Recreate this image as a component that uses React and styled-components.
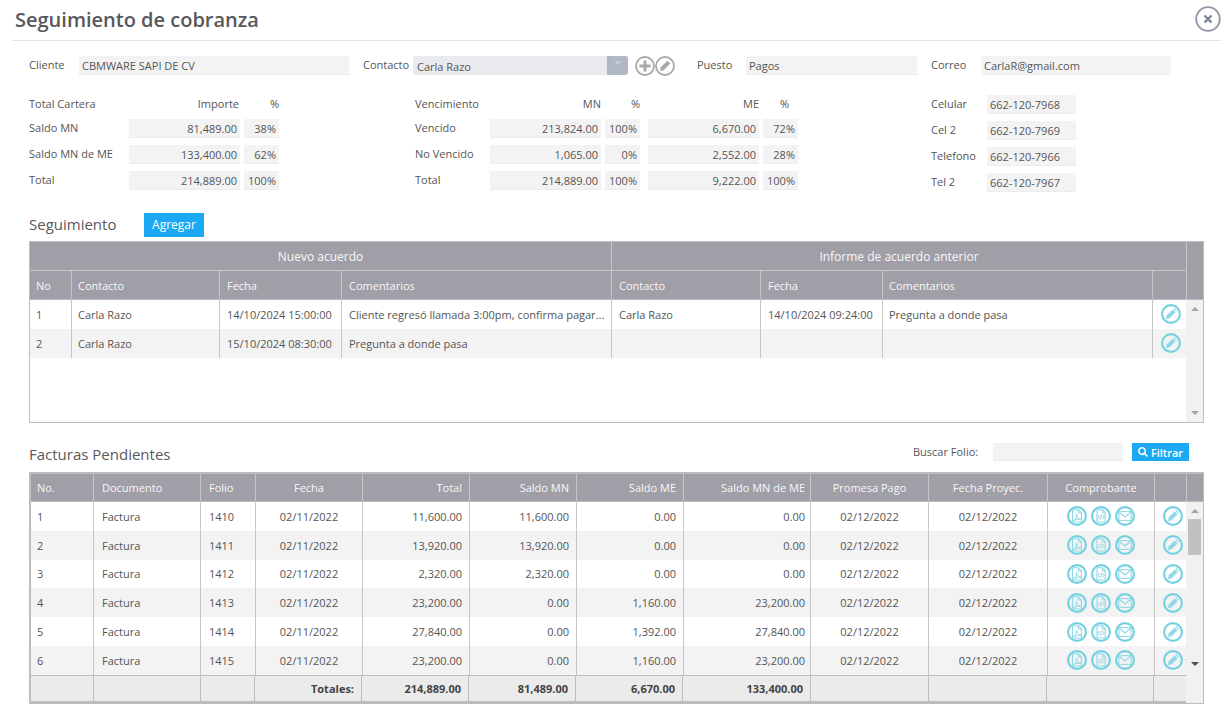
import React from 'react';
import styled, { createGlobalStyle } from 'styled-components';
import { FaSearch } from 'react-icons/fa';

const GlobalStyle = createGlobalStyle`
  html, body { margin: 0; padding: 0; background: #fff; }
  * { box-sizing: border-box; }
  body { font-family: "Open Sans", "Liberation Sans", sans-serif; font-size: 11px; color: #555; }
`;

const Page = styled.div`
  width: 1230px;
  height: 722px;
  overflow: hidden;
`;
const Header = styled.div`
  display: flex;
  align-items: center;
  justify-content: space-between;
  height: 41px;
  margin: 0 9px 0 12px;
  padding: 0 0 1px 3px;
  border-bottom: 1px solid #e2e2e2;
  h1 {
    margin: 0;
    font-size: 20px;
    font-weight: 600;
    color: #58585c;
  }
`;
const CloseIcon = styled.svg`
  width: 26px;
  height: 26px;
  margin-top: -1px;
`;
const ContactRow = styled.div`
  display: flex;
  align-items: center;
  height: 19px;
  margin: 15px 0 0 29px;
`;
const Label = styled.span`
  display: block;
  width: ${(p) => p.$w || 'auto'};
  flex: none;
  color: #555;
  line-height: 17px;
  padding-bottom: 2px;
  white-space: nowrap;
`;
const Field = styled.div`
  width: ${(p) => p.$w || 'auto'};
  height: 19px;
  flex: none;
  padding: 0 3px;
  background: #f3f3f3;
  border-bottom: 1px solid #ececec;
  line-height: 19px;
  text-align: ${(p) => (p.$right ? 'right' : 'left')};
  margin-right: ${(p) => p.$mr || '0'};
  white-space: nowrap;
`;
const SelectBox = styled.div`
  display: flex;
  justify-content: space-between;
  width: 215px;
  height: 19px;
  flex: none;
  margin-right: 7px;
  padding-left: 4px;
  background: #eaebef;
  border-radius: 2px;
  line-height: 21px;
`;
const SelectArrow = styled.div`
  display: flex;
  justify-content: center;
  padding-top: 5px;
  width: 21px;
  height: 19px;
  background: #b2b7c4;
  border-radius: 0 3px 3px 0;
  &::after {
    content: '';
    width: 0;
    height: 0;
    border-left: 4px solid transparent;
    border-right: 4px solid transparent;
    border-top: 4px solid #c8cbd4;
  }
`;
const ToolIcons = styled.div`
  display: flex;
  align-items: center;
  width: 62px;
  flex: none;
`;
const Stats = styled.div`
  display: flex;
  align-items: flex-start;
  margin: 20px 0 0 29px;
`;
const StatGrid = styled.div`
  display: grid;
  grid-template-columns: ${(p) => p.$cols};
  row-gap: 7px;
  margin-right: ${(p) => p.$mr || '0'};
  align-items: center;
`;
const StatHead = styled.div`
  height: 17px;
  line-height: 18px;
  text-align: ${(p) => (p.$right ? 'right' : 'left')};
  padding-right: ${(p) => p.$pr || '0'};
`;
const Spacer = styled.div``;
const SectionHead = styled.div`
  display: flex;
  align-items: center;
  height: 24px;
  margin: 21px 0 4px 29px;
  h2 {
    width: 115px;
    margin: 0;
    padding-bottom: 2px;
    font-size: 15px;
    font-weight: 400;
    color: #58585c;
  }
`;
const AddButton = styled.div`
  width: 60px;
  height: 24px;
  background: #1aa9f2;
  color: #fff;
  font-size: 12px;
  line-height: 24px;
  text-align: center;
`;
const InvoiceHead = styled.div`
  display: flex;
  align-items: center;
  height: 24px;
  margin: 17px 0 8px 29px;
  h2 {
    width: 884px;
    margin: 0;
    padding-top: 3px;
    font-size: 15px;
    font-weight: 400;
    color: #58585c;
  }
`;
const SearchLabel = styled.span`
  width: 80px;
  padding-bottom: 2px;
  line-height: 17px;
`;
const SearchInput = styled.div`
  width: 130px;
  height: 18px;
  margin-right: 9px;
  background: #f3f3f3;
  border-bottom: 1px solid #ececec;
`;
const FilterButton = styled.div`
  display: flex;
  align-items: center;
  justify-content: center;
  gap: 3px;
  width: 57px;
  height: 18px;
  background: #1aa9f2;
  color: #fff;
  font-weight: 600;
  svg { width: 10px; height: 10px; }
`;
const Frame = styled.div`
  width: 1175px;
  margin-left: 29px;
  height: ${(p) => p.$h};
  border: 1px solid #bdbdbd;
  border-left-width: ${(p) => p.$left || '1px'};
  border-top-width: ${(p) => p.$left || '1px'};
`;
const HeadWrap = styled.div`
  display: flex;
  background: #a09ea7;
  color: #f8f8f8;
  border-bottom: 1px solid #bdbdbd;
`;
const HeadStack = styled.div`
  width: ${(p) => p.$w};
  flex: none;
`;
const HeadEnd = styled.div`
  flex: 1;
  border-left: 1px solid #c6c6c6;
`;
const GroupRow = styled.div`
  display: grid;
  grid-template-columns: 581px 575px;
  height: 29px;
  border-bottom: 1px solid #c6c6c6;
`;
const GroupCell = styled.div`
  font-size: 12px;
  line-height: 29px;
  text-align: center;
  & + & { border-left: 1px solid #c6c6c6; }
`;
const Row = styled.div`
  display: grid;
  grid-template-columns: ${(p) => p.$cols};
  height: ${(p) => p.$h};
  background: ${(p) => (p.$alt ? '#f3f3f3' : '#fff')};
`;
const HeadRow = styled(Row)`
  background: transparent;
`;
const Cell = styled.div`
  display: flex;
  align-items: center;
  justify-content: ${(p) => (p.$align === 'right' ? 'flex-end' : p.$align === 'center' ? 'center' : 'flex-start')};
  min-width: 0;
  padding-left: ${(p) => p.$pl || (p.$align === 'center' ? '0' : '7px')};
  padding-right: ${(p) => p.$pr || (p.$align === 'center' ? '0' : '7px')};
  padding-bottom: ${(p) => p.$pb || '0'};
  border-right: 1px solid ${(p) => (p.$last ? 'transparent' : '#c6c6c6')};
  gap: ${(p) => p.$gap || '0'};
  white-space: nowrap;
`;
const HeadCell = styled(Cell)`
  color: #f8f8f8;
`;
const TotalCell = styled(Cell)`
  font-weight: 700;
  border-right-color: ${(p) => (p.$last ? 'transparent' : '#bdbdbd')};
  color: #444;
`;
const BodyWrap = styled.div`
  display: flex;
`;
const Rows = styled.div`
  width: ${(p) => p.$w};
  flex: none;
`;
const Scrollbar = styled.div`
  display: flex;
  flex-direction: column;
  align-items: center;
  justify-content: space-between;
  flex: 1;
  height: ${(p) => p.$h};
  padding: ${(p) => p.$pad};
  background: #f1f1f1;
`;
const ArrowUp = styled.div`
  width: 0;
  height: 0;
  border-left: 4px solid transparent;
  border-right: 4px solid transparent;
  border-bottom: 4px solid ${(p) => p.$c || '#a3a3a3'};
`;
const ArrowDown = styled.div`
  width: 0;
  height: 0;
  border-left: 4px solid transparent;
  border-right: 4px solid transparent;
  border-top: 4px solid ${(p) => p.$c || '#a3a3a3'};
`;
const Thumb = styled.div`
  width: 13px;
  height: 36px;
  margin-top: 6px;
  margin-bottom: auto;
  background: #c1c1c1;
`;
const FooterWrap = styled.div`
  display: flex;
  height: 28px;
`;
const FooterRows = styled(Row)`
  width: 1155px;
  flex: none;
  background: #ebebeb;
  border-top: 1px solid #bdbdbd;
  border-bottom: 2px solid #bdbdbd;
  height: 28px;
`;
const FooterEnd = styled.div`
  flex: 1;
  background: #f1f1f1;
`;
const IconSvg = styled.svg`
  width: 20px;
  height: 20px;
  flex: none;
`;

const TEAL = '#72d0e0';
const TEAL_SOFT = '#8fd9e6';

const Ring = ({ children }) => (
  <IconSvg viewBox="0 0 20 20" fill="none">
    <circle cx="10" cy="10" r="8.9" stroke={TEAL} strokeWidth="2.1" fill="none" />
    {children}
  </IconSvg>
);
const PencilIcon = () => (
  <Ring>
    <path d="M4.8 15.2l1-3.9 5.9-5.9 2.9 2.9-5.9 5.9z" fill={TEAL_SOFT} />
    <path d="M12.4 4.7l.9-.8 2.8 2.8-.8.9z" fill={TEAL_SOFT} />
  </Ring>
);
const PdfIcon = () => (
  <Ring>
    <path d="M5.5 3.8h6l2.9 2.9V16H5.5z" stroke={TEAL_SOFT} strokeWidth="1.1" />
    <path d="M11.3 3.9V7h3" stroke={TEAL_SOFT} strokeWidth="1" />
    <path d="M6.4 14.8c2.2-1.3 3.3-3.6 3.2-6.4.1 2.6 1.6 4.2 4.2 4.8-2.8-.2-5.2.3-7.4 1.6z" stroke={TEAL_SOFT} strokeWidth="1" />
  </Ring>
);
const XmlIcon = () => (
  <Ring>
    <path d="M6 3.8h5.4l2.8 2.8V16H6z" stroke={TEAL_SOFT} strokeWidth="1.1" />
    <path d="M11.2 3.9V7h3" stroke={TEAL_SOFT} strokeWidth="1" />
    <path d="M8.6 9l-1.7 2.1 1.7 2.1M11.6 9l1.7 2.1-1.7 2.1M10.7 8.6l-1.2 5" stroke={TEAL_SOFT} strokeWidth="1" />
  </Ring>
);
const MailIcon = () => (
  <Ring>
    <rect x="3.8" y="5.6" width="12.4" height="8.8" stroke={TEAL_SOFT} strokeWidth="1.1" />
    <path d="M4 6L10 11l6-5" stroke={TEAL_SOFT} strokeWidth="1.1" />
  </Ring>
);
const PlusGrey = () => (
  <IconSvg viewBox="0 0 20 20" fill="none">
    <circle cx="10" cy="10" r="9" stroke="#a9a9a9" strokeWidth="1.8" />
    <path d="M10 4.4v11.2M4.4 10h11.2" stroke="#a9a9a9" strokeWidth="3" />
  </IconSvg>
);
const PencilGrey = () => (
  <IconSvg viewBox="0 0 20 20" fill="none">
    <circle cx="10" cy="10" r="9" stroke="#a9a9a9" strokeWidth="1.8" />
    <path d="M4.8 15.2l1-3.9 6.6-6.6 2.9 2.9-6.6 6.6z" fill="#a9a9a9" />
  </IconSvg>
);

const followCols = '42px 148px 122px 270px 149px 122px 270px 33px';
const invoiceCols = '63px 107px 55px 107px 107px 107px 107px 127px 118px 119px 107px 31px';
const footerCols = '63px 107px 54px 107px 107px 107px 107px 128px 118px 118px 107px 32px';

const followPad = ['6px', '6px', '7px', '7px', '7px', '7px', '6px', '7px'];
const followHead = ['No', 'Contacto', 'Fecha', 'Comentarios', 'Contacto', 'Fecha', 'Comentarios', ''];
const followRows = [
  ['1', 'Carla Razo', '14/10/2024 15:00:00', 'Cliente regresó llamada 3:00pm, confirma pagar...', 'Carla Razo', '14/10/2024 09:24:00', 'Pregunta a donde pasa'],
  ['2', 'Carla Razo', '15/10/2024 08:30:00', 'Pregunta a donde pasa', '', '', ''],
];

const invoiceAlign = ['left', 'left', 'left', 'center', 'right', 'right', 'right', 'right', 'center', 'center', 'center', 'center'];
const invoiceLeftPad = ['6px', '8px', '8px'];
const invoiceHead = ['No.', 'Documento', 'Folio', 'Fecha', 'Total', 'Saldo MN', 'Saldo ME', 'Saldo MN de ME', 'Promesa Pago', 'Fecha Proyec.', 'Comprobante', ''];
const invoices = [
  ['1', '1410', '11,600.00', '11,600.00', '0.00', '0.00'],
  ['2', '1411', '13,920.00', '13,920.00', '0.00', '0.00'],
  ['3', '1412', '2,320.00', '2,320.00', '0.00', '0.00'],
  ['4', '1413', '23,200.00', '0.00', '1,160.00', '23,200.00'],
  ['5', '1414', '27,840.00', '0.00', '1,392.00', '27,840.00'],
  ['6', '1415', '23,200.00', '0.00', '1,160.00', '23,200.00'],
];
const totals = ['', '', '', 'Totales:', '214,889.00', '81,489.00', '6,670.00', '133,400.00', '', '', '', ''];

const leftStats = [
  ['Saldo MN', '81,489.00', '38%'],
  ['Saldo MN de ME', '133,400.00', '62%'],
  ['Total', '214,889.00', '100%'],
];
const midStats = [
  ['Vencido', '213,824.00', '100%', '6,670.00', '72%'],
  ['No Vencido', '1,065.00', '0%', '2,552.00', '28%'],
  ['Total', '214,889.00', '100%', '9,222.00', '100%'],
];
const phones = [
  ['Celular', '662-120-7968'],
  ['Cel 2', '662-120-7969'],
  ['Telefono', '662-120-7966'],
  ['Tel 2', '662-120-7967'],
];

export default function App() {
  return (
    <Page>
      <GlobalStyle />
      <Header>
        <h1>Seguimiento de cobranza</h1>
        <CloseIcon viewBox="0 0 26 26" fill="none">
          <circle cx="13" cy="13" r="11.8" stroke="#8f95a6" strokeWidth="1.8" />
          <path d="M9.5 9.5l7 7M16.5 9.5l-7 7" stroke="#7b8296" strokeWidth="2.4" />
        </CloseIcon>
      </Header>

      <ContactRow>
        <Label $w="50px">Cliente</Label>
        <Field $w="270px" $mr="14px">CBMWARE SAPI DE CV</Field>
        <Label $w="50px">Contacto</Label>
        <SelectBox>
          Carla Razo
          <SelectArrow />
        </SelectBox>
        <ToolIcons>
          <PlusGrey />
          <PencilGrey />
        </ToolIcons>
        <Label $w="49px">Puesto</Label>
        <Field $w="171px" $mr="14px">Pagos</Field>
        <Label $w="50px">Correo</Label>
        <Field $w="190px">CarlaR@gmail.com</Field>
      </ContactRow>

      <Stats>
        <StatGrid $cols="100px 111px 4px 35px" $mr="136px">
          <StatHead>Total Cartera</StatHead>
          <StatHead $right $pr="1px">Importe</StatHead>
          <Spacer />
          <StatHead $right>%</StatHead>
          {leftStats.map((s) => (
            <React.Fragment key={s[0]}>
              <Label>{s[0]}</Label>
              <Field $right>{s[1]}</Field>
              <Spacer />
              <Field $right>{s[2]}</Field>
            </React.Fragment>
          ))}
        </StatGrid>
        <StatGrid $cols="75px 111px 4px 35px 8px 111px 4px 35px" $mr="133px">
          <StatHead>Vencimiento</StatHead>
          <StatHead $right>MN</StatHead>
          <Spacer />
          <StatHead $right>%</StatHead>
          <Spacer />
          <StatHead $right>ME</StatHead>
          <Spacer />
          <StatHead $right $pr="9px">%</StatHead>
          {midStats.map((s) => (
            <React.Fragment key={s[0]}>
              <Label>{s[0]}</Label>
              <Field $right>{s[1]}</Field>
              <Spacer />
              <Field $right>{s[2]}</Field>
              <Spacer />
              <Field $right>{s[3]}</Field>
              <Spacer />
              <Field $right>{s[4]}</Field>
            </React.Fragment>
          ))}
        </StatGrid>
        <StatGrid $cols="56px 89px">
          {phones.map((s) => (
            <React.Fragment key={s[0]}>
              <Label>{s[0]}</Label>
              <Field>{s[1]}</Field>
            </React.Fragment>
          ))}
        </StatGrid>
      </Stats>

      <SectionHead>
        <h2>Seguimiento</h2>
        <AddButton>Agregar</AddButton>
      </SectionHead>
      <Frame $h="182px">
        <HeadWrap>
          <HeadStack $w="1156px">
            <GroupRow>
              <GroupCell>Nuevo acuerdo</GroupCell>
              <GroupCell>Informe de acuerdo anterior</GroupCell>
            </GroupRow>
            <HeadRow $cols={followCols} $h="28px">
              {followHead.map((h, i) => (
                <HeadCell key={i} $pl={followPad[i]} $last={i === followHead.length - 1}>{h}</HeadCell>
              ))}
            </HeadRow>
          </HeadStack>
          <HeadEnd />
        </HeadWrap>
        <BodyWrap>
          <Rows $w="1156px">
            {followRows.map((r, n) => (
              <Row key={n} $cols={followCols} $h="29px" $alt={n % 2 === 1}>
                {r.map((c, i) => (
                  <Cell key={i} $pl={followPad[i]} $pr="0">{c}</Cell>
                ))}
                <Cell $align="center" $pl="3px" $pb="1px" $last><PencilIcon /></Cell>
              </Row>
            ))}
          </Rows>
          <Scrollbar $h="122px" $pad="7px 0 7px">
            <ArrowUp />
            <ArrowDown />
          </Scrollbar>
        </BodyWrap>
      </Frame>

      <InvoiceHead>
        <h2>Facturas Pendientes</h2>
        <SearchLabel>Buscar Folio:</SearchLabel>
        <SearchInput />
        <FilterButton><FaSearch />Filtrar</FilterButton>
      </InvoiceHead>
      <Frame $h="232px" $left="2px">
        <HeadWrap>
          <HeadStack $w="1155px">
            <HeadRow $cols={invoiceCols} $h="27px">
              {invoiceHead.map((h, i) => (
                <HeadCell
                  key={i}
                  $align={invoiceAlign[i]}
                  $pl={invoiceLeftPad[i]}
                  $pr={i === 7 ? '5px' : undefined}
                  $last={i === invoiceHead.length - 1}
                >
                  {h}
                </HeadCell>
              ))}
            </HeadRow>
          </HeadStack>
          <HeadEnd />
        </HeadWrap>
        <BodyWrap>
          <Rows $w="1155px">
            {invoices.map((r, n) => (
              <Row key={r[1]} $cols={invoiceCols} $h="28.8px" $alt={n % 2 === 1}>
                <Cell $pl="6px">{r[0]}</Cell>
                <Cell $pl="8px">Factura</Cell>
                <Cell $pl="8px">{r[1]}</Cell>
                <Cell $align="center">02/11/2022</Cell>
                <Cell $align="right">{r[2]}</Cell>
                <Cell $align="right">{r[3]}</Cell>
                <Cell $align="right">{r[4]}</Cell>
                <Cell $align="right" $pr="5px">{r[5]}</Cell>
                <Cell $align="center">02/12/2022</Cell>
                <Cell $align="center">02/12/2022</Cell>
                <Cell $align="center" $gap="4px">
                  <PdfIcon />
                  <XmlIcon />
                  <MailIcon />
                </Cell>
                <Cell $align="center" $pl="5px" $last><PencilIcon /></Cell>
              </Row>
            ))}
          </Rows>
          <Scrollbar $h="173px" $pad="7px 0 9px">
            <ArrowUp />
            <Thumb />
            <ArrowDown $c="#505050" />
          </Scrollbar>
        </BodyWrap>
        <FooterWrap>
          <FooterRows $cols={footerCols}>
            {totals.map((t, i) => (
              <TotalCell key={i} $align={invoiceAlign[i] === 'left' ? 'left' : 'right'} $last={i === totals.length - 1}>{t}</TotalCell>
            ))}
          </FooterRows>
          <FooterEnd />
        </FooterWrap>
      </Frame>
    </Page>
  );
}
